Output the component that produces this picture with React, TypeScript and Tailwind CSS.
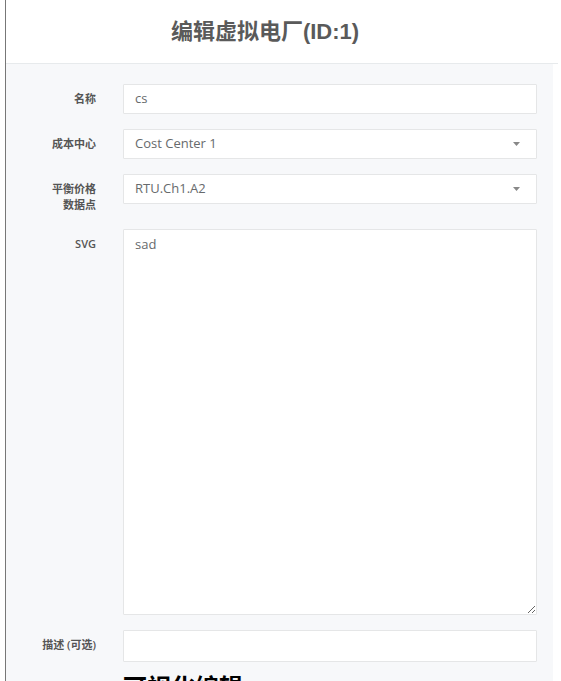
const labelCls =
  'w-[90px] shrink-0 text-right text-[11px] font-semibold leading-[16px] text-[#555] pt-[7px]'
const inputCls =
  'flex-1 h-[30px] bg-white border border-[#e5e6e7] rounded-[1px] px-[11px] text-[13px] text-[#676a6c] flex items-center'

function Caret() {
  return (
    <svg width="7" height="4" viewBox="0 0 7 4" className="mr-[5px]">
      <path d="M0 0 L7 0 L3.5 4 Z" fill="#888" />
    </svg>
  )
}

function Row({ label, children }: { label: React.ReactNode; children: React.ReactNode }) {
  return (
    <div className="flex items-start gap-[27px] mb-[15px]">
      <div className={labelCls}>{label}</div>
      {children}
    </div>
  )
}

export default function App() {
  return (
    <div
      className="w-full h-[681px] overflow-hidden bg-white"
      style={{ fontFamily: '"Open Sans", "Noto Sans CJK SC", sans-serif' }}
    >
      <div className="ml-[5px] mr-[3px] border-l border-[#777] min-h-[760px]">
        <div className="h-[64px] border-b border-[#e7eaec] flex items-center justify-center pr-[34px]">
          <h1
            className="text-[22px] font-bold text-[#5a5a5a]"
            style={{ fontFamily: '"Liberation Sans", "Noto Sans CJK SC", sans-serif' }}
          >
            编辑虚拟电厂(ID:1)
          </h1>
        </div>
        <div className="mr-[5px] bg-[#f7f8fa] pt-[20px] pr-[16px] pb-[10px]">
          <Row label="名称">
            <div className={inputCls}>cs</div>
          </Row>
          <Row label="成本中心">
            <div className={inputCls + ' justify-between'}>
              <span>Cost Center 1</span>
              <Caret />
            </div>
          </Row>
          <div className="flex items-start gap-[27px] mb-[16px]">
            <div className={labelCls + ' pt-[6px]'}>
              平衡价格
              <br />
              数据点
            </div>
            <div className={inputCls + ' justify-between'}>
              <span>RTU.Ch1.A2</span>
              <Caret />
            </div>
          </div>
          <Row label="SVG">
            <textarea
              defaultValue="sad"
              className="flex-1 h-[386px] bg-white border border-[#e5e6e7] rounded-[1px] px-[11px] py-[5px] text-[13px] text-[#676a6c] outline-none"
            />
          </Row>
          <Row label="描述 (可选)">
            <div className={inputCls + ' h-[32px]'}></div>
          </Row>
          <div className="pl-[117px] text-[24px] font-bold text-black leading-[30px] -mt-[5px]">
            可视化编辑
          </div>
        </div>
      </div>
    </div>
  )
}
